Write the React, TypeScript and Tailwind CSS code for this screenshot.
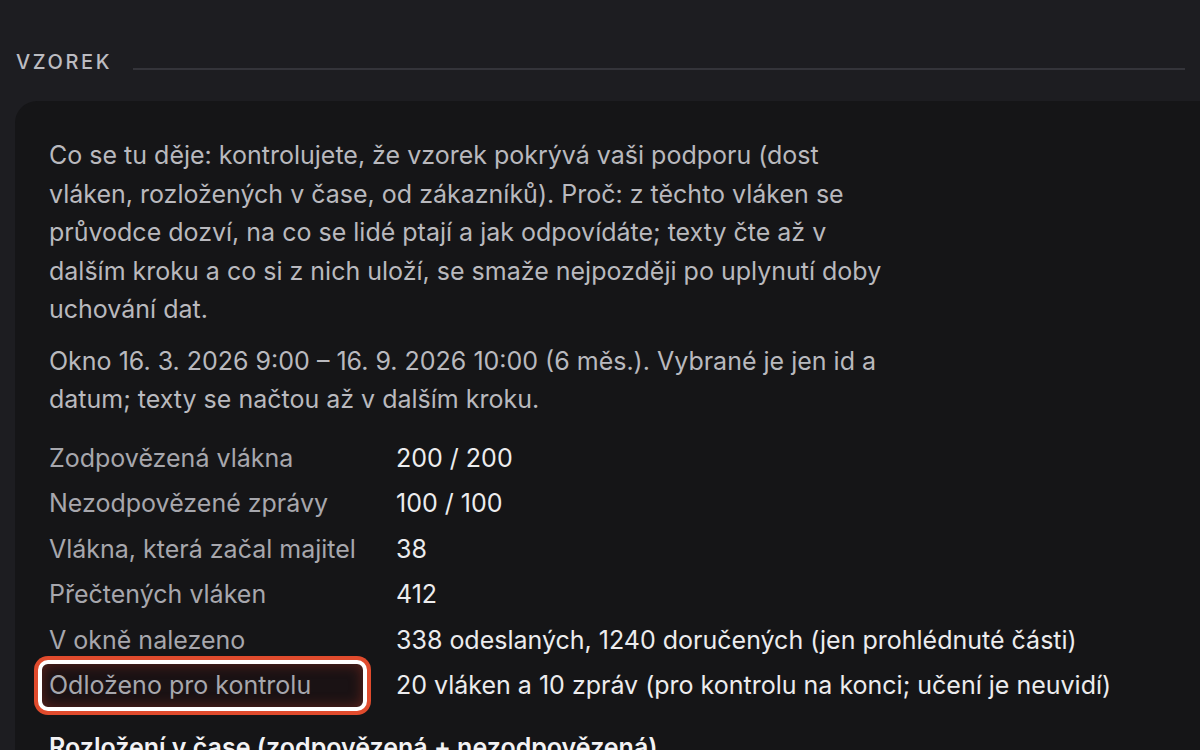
const rows: { label: string; value: string; flagged?: boolean }[] = [
  { label: 'Zodpovězená vlákna', value: '200 / 200' },
  { label: 'Nezodpovězené zprávy', value: '100 / 100' },
  { label: 'Vlákna, která začal majitel', value: '38' },
  { label: 'Přečtených vláken', value: '412' },
  { label: 'V okně nalezeno', value: '338 odeslaných, 1240 doručených (jen prohlédnuté části)' },
  { label: 'Odloženo pro kontrolu', value: '20 vláken a 10 zpráv (pro kontrolu na konci; učení je neuvidí)', flagged: true },
];

export default function App() {
  return (
    <div className="h-[750px] w-full overflow-hidden bg-[#1d1d21] px-[15px] pt-12 font-['Inter','Noto_Sans',sans-serif]">
      <div className="ml-px flex items-center gap-[21px]">
        <h2 className="text-[20px] font-medium uppercase leading-7 tracking-[0.13em] text-[#bcbcc1]">Vzorek</h2>
        <div className="mt-[14px] h-[2px] flex-1 bg-[#34343a]"></div>
      </div>

      <div className="mt-[25px] w-[1240px] rounded-[22px] bg-[#151517] pl-[34px] pt-[35px] pb-10">
        <p className="max-w-[840px] text-[25px] leading-[38.5px] text-[#b9b9be]">
          Co se tu děje: kontrolujete, že vzorek pokrývá vaši podporu (dost vláken, rozložených v čase, od zákazníků).
          Proč: z těchto vláken se průvodce dozví, na co se lidé ptají a jak odpovídáte; texty čte až v dalším kroku a co
          si z nich uloží, se smaže nejpozději po uplynutí doby uchování dat.
        </p>
        <p className="mt-[13px] max-w-[840px] text-[25px] leading-[38.5px] text-[#b9b9be]">
          Okno 16. 3. 2026 9:00 – 16. 9. 2026 10:00 (6 měs.). Vybrané je jen id a datum; texty se načtou až v dalším
          kroku.
        </p>

        <div className="mt-[17px] grid grid-cols-[347px_1fr] text-[25px] leading-[45.5px]">
          {rows.map((r) => (
            <div key={r.label} className="contents">
              <div className="relative text-[#a7a7ad]">
                {r.flagged && (
                  <div className="absolute -left-[11px] -top-[3px] h-[51px] w-[329px] rounded-[10px] border-4 border-white bg-[#1a1214] shadow-[0_0_0_4px_#e04b2d,inset_0_0_14px_rgba(200,60,40,0.4)]"></div>
                )}
                <span className="relative">{r.label}</span>
              </div>
              <div className="text-[#ececee]">{r.value}</div>
            </div>
          ))}
        </div>

        <h3 className="mt-[22px] text-[25px] font-semibold leading-8 text-[#f2f2f4]">
          Rozložení v čase (zodpovězená + nezodpovězená)
        </h3>
      </div>
    </div>
  );
}
